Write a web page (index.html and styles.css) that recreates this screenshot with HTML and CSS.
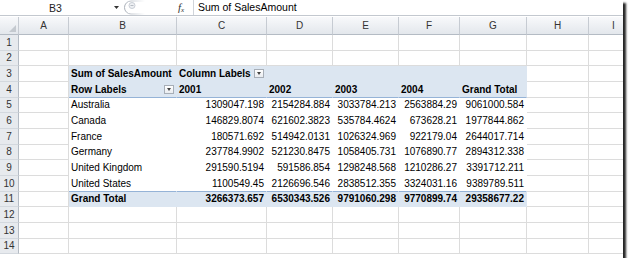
FILE: index.html
```html
<!DOCTYPE html>
<html>
<head>
    <link rel="stylesheet" href="styles.css">
</head>
<body>
    <div class="window">
        <!-- Formula bar -->
        <div class="formula-bar">
            <div class="name-box">B3</div>
            <svg class="name-arrow" width="10" height="15" viewBox="0 0 10 15">
                <path d="M3 6 H8 L5.5 9 Z" fill="#333"/>
            </svg>
            <svg class="grip" width="52" height="15" viewBox="0 0 52 15">
                <defs>
                    <linearGradient id="fade" x1="0" x2="1" y1="0" y2="0">
                        <stop offset="0" stop-color="#a9afb8"/>
                        <stop offset="0.6" stop-color="#d9dde2"/>
                        <stop offset="1" stop-color="#fff"/>
                    </linearGradient>
                </defs>
                <path d="M24 1 H10 A6.5 6.5 0 0 0 10 14 H24" fill="none" stroke="url(#fade)" stroke-width="1"/>
                <circle cx="11" cy="5.5" r="3" fill="#eef0f3" stroke="#c9ced5"/>
                <path d="M9.5 5.5 H12.5" stroke="#b5bbc3"/>
            </svg>
            <span class="fx"><i>f</i><sub>x</sub></span>
            <div class="formula">Sum of SalesAmount</div>
        </div>

        <!-- Sheet grid -->
        <div class="sheet">
            <div class="ch corner"><span class="corner-mark"></span></div>
            <div class="ch">A</div>
            <div class="ch">B</div>
            <div class="ch">C</div>
            <div class="ch">D</div>
            <div class="ch">E</div>
            <div class="ch">F</div>
            <div class="ch">G</div>
            <div class="ch">H</div>
            <div class="ch">I</div>

            <div class="rh">1</div>
            <div class="c"></div><div class="c"></div><div class="c"></div><div class="c"></div><div class="c"></div><div class="c"></div><div class="c"></div><div class="c"></div><div class="c"></div>

            <div class="rh">2</div>
            <div class="c"></div><div class="c"></div><div class="c"></div><div class="c"></div><div class="c"></div><div class="c"></div><div class="c"></div><div class="c"></div><div class="c"></div>

            <div class="rh">3</div>
            <div class="c"></div>
            <div class="ph b">Sum of SalesAmount</div>
            <div class="ph b split">Column Labels <span class="dd"></span></div>
            <div class="ph"></div>
            <div class="ph"></div>
            <div class="ph"></div>
            <div class="ph"></div>
            <div class="c"></div><div class="c"></div>

            <div class="rh">4</div>
            <div class="c"></div>
            <div class="ph ul b split">Row Labels <span class="dd"></span></div>
            <div class="ph ul b">2001</div>
            <div class="ph ul b">2002</div>
            <div class="ph ul b">2003</div>
            <div class="ph ul b">2004</div>
            <div class="ph ul b">Grand Total</div>
            <div class="c"></div><div class="c"></div>

            <div class="rh">5</div>
            <div class="c"></div>
            <div class="pd">Australia</div>
            <div class="pd num">1309047.198</div>
            <div class="pd num">2154284.884</div>
            <div class="pd num">3033784.213</div>
            <div class="pd num">2563884.29</div>
            <div class="pd num">9061000.584</div>
            <div class="c"></div><div class="c"></div>

            <div class="rh">6</div>
            <div class="c"></div>
            <div class="pd">Canada</div>
            <div class="pd num">146829.8074</div>
            <div class="pd num">621602.3823</div>
            <div class="pd num">535784.4624</div>
            <div class="pd num">673628.21</div>
            <div class="pd num">1977844.862</div>
            <div class="c"></div><div class="c"></div>

            <div class="rh">7</div>
            <div class="c"></div>
            <div class="pd">France</div>
            <div class="pd num">180571.692</div>
            <div class="pd num">514942.0131</div>
            <div class="pd num">1026324.969</div>
            <div class="pd num">922179.04</div>
            <div class="pd num">2644017.714</div>
            <div class="c"></div><div class="c"></div>

            <div class="rh">8</div>
            <div class="c"></div>
            <div class="pd">Germany</div>
            <div class="pd num">237784.9902</div>
            <div class="pd num">521230.8475</div>
            <div class="pd num">1058405.731</div>
            <div class="pd num">1076890.77</div>
            <div class="pd num">2894312.338</div>
            <div class="c"></div><div class="c"></div>

            <div class="rh">9</div>
            <div class="c"></div>
            <div class="pd">United Kingdom</div>
            <div class="pd num">291590.5194</div>
            <div class="pd num">591586.854</div>
            <div class="pd num">1298248.568</div>
            <div class="pd num">1210286.27</div>
            <div class="pd num">3391712.211</div>
            <div class="c"></div><div class="c"></div>

            <div class="rh">10</div>
            <div class="c"></div>
            <div class="pd ul">United States</div>
            <div class="pd ul num">1100549.45</div>
            <div class="pd ul num">2126696.546</div>
            <div class="pd ul num">2838512.355</div>
            <div class="pd ul num">3324031.16</div>
            <div class="pd ul num">9389789.511</div>
            <div class="c"></div><div class="c"></div>

            <div class="rh">11</div>
            <div class="c"></div>
            <div class="pt b">Grand Total</div>
            <div class="pt b num">3266373.657</div>
            <div class="pt b num">6530343.526</div>
            <div class="pt b num">9791060.298</div>
            <div class="pt b num">9770899.74</div>
            <div class="pt b num">29358677.22</div>
            <div class="c"></div><div class="c"></div>

            <div class="rh">12</div>
            <div class="c"></div><div class="c"></div><div class="c"></div><div class="c"></div><div class="c"></div><div class="c"></div><div class="c"></div><div class="c"></div><div class="c"></div>

            <div class="rh">13</div>
            <div class="c"></div><div class="c"></div><div class="c"></div><div class="c"></div><div class="c"></div><div class="c"></div><div class="c"></div><div class="c"></div><div class="c"></div>

            <div class="rh">14</div>
            <div class="c"></div><div class="c"></div><div class="c"></div><div class="c"></div><div class="c"></div><div class="c"></div><div class="c"></div><div class="c"></div><div class="c"></div>
        </div>
    </div>
</body>
</html>
```

FILE: styles.css
```css
body {
    margin: 0;
    background: #fff;
    font-family: "Liberation Sans", Arial, sans-serif;
    font-size: 10px;
    color: #000;
}

.window {
    width: 623px;
    height: 258px;
    overflow: hidden;
    background: #fff;
    box-shadow: 3px 3px 2px rgba(0, 0, 0, 0.85);
}

/* Formula bar */
.formula-bar {
    display: flex;
    align-items: center;
    height: 15px;
    border-bottom: 1px solid #c3c8cf;
    margin-bottom: 1px;
    font-size: 10.5px;
}

.name-box {
    width: 111px;
    text-align: center;
    color: #222;
}

.grip {
    display: block;
}

.fx {
    width: 20px;
    box-sizing: border-box;
    padding-left: 5px;
    font-family: "Liberation Serif", serif;
    font-size: 11px;
    color: #333;
}

.fx sub {
    font-size: 7px;
    font-style: italic;
    vertical-align: -1px;
}

.formula {
    flex: 1;
    height: 15px;
    line-height: 15px;
    border-left: 1px solid #d0d4da;
    padding-left: 4px;
}

/* Sheet */
.sheet {
    display: grid;
    grid-template-columns: 19px 50px 108px 90px 66px 66px 61px 67px 62px 50px;
    grid-template-rows: 18px repeat(14, 15.67px);
}

.sheet > div {
    box-sizing: border-box;
    border-right: 1px solid #dcdcdc;
    border-bottom: 1px solid #dcdcdc;
    display: flex;
    align-items: flex-end;
    padding: 0 2px 1px;
    line-height: 12px;
    white-space: nowrap;
    overflow: hidden;
}

.sheet > .ch {
    justify-content: center;
    align-items: center;
    padding: 1px 0 0;
    background: linear-gradient(#f8f9fb, #e3e7ec);
    border-right-color: #c6cbd2;
    border-bottom-color: #b4bbc4;
    color: #333;
}

.sheet > .corner {
    position: relative;
}

.corner-mark {
    position: absolute;
    right: 2px;
    bottom: 2px;
    width: 0;
    height: 0;
    border-left: 7px solid transparent;
    border-bottom: 7px solid #c4c9cf;
}

.sheet > .rh {
    justify-content: center;
    padding: 0 0 1px;
    background: #e7eaee;
    border-right-color: #b4bbc4;
    border-bottom-color: #d3d8de;
    color: #333;
}

.sheet > .ph {
    background: #dce6f1;
    border-color: #dce6f1;
}

.sheet > .pd {
    background: #fff;
    border-color: #fff;
}

.sheet > .pt {
    background: #dce6f1;
    border-color: #dce6f1;
}

.sheet > .ul {
    border-bottom-color: #95b3d7;
}

.b {
    font-weight: bold;
}

.num {
    justify-content: flex-end;
}

.split {
    justify-content: space-between;
}

/* Pivot filter button */
.dd {
    width: 10px;
    height: 9px;
    box-sizing: border-box;
    margin-bottom: 2px;
    border: 1px solid #a7aeb7;
    background: linear-gradient(#fff, #e9ecf0);
    display: flex;
    align-items: center;
    justify-content: center;
}

.dd::after {
    content: "";
    width: 0;
    height: 0;
    border-left: 2.5px solid transparent;
    border-right: 2.5px solid transparent;
    border-top: 3px solid #444;
}
```
